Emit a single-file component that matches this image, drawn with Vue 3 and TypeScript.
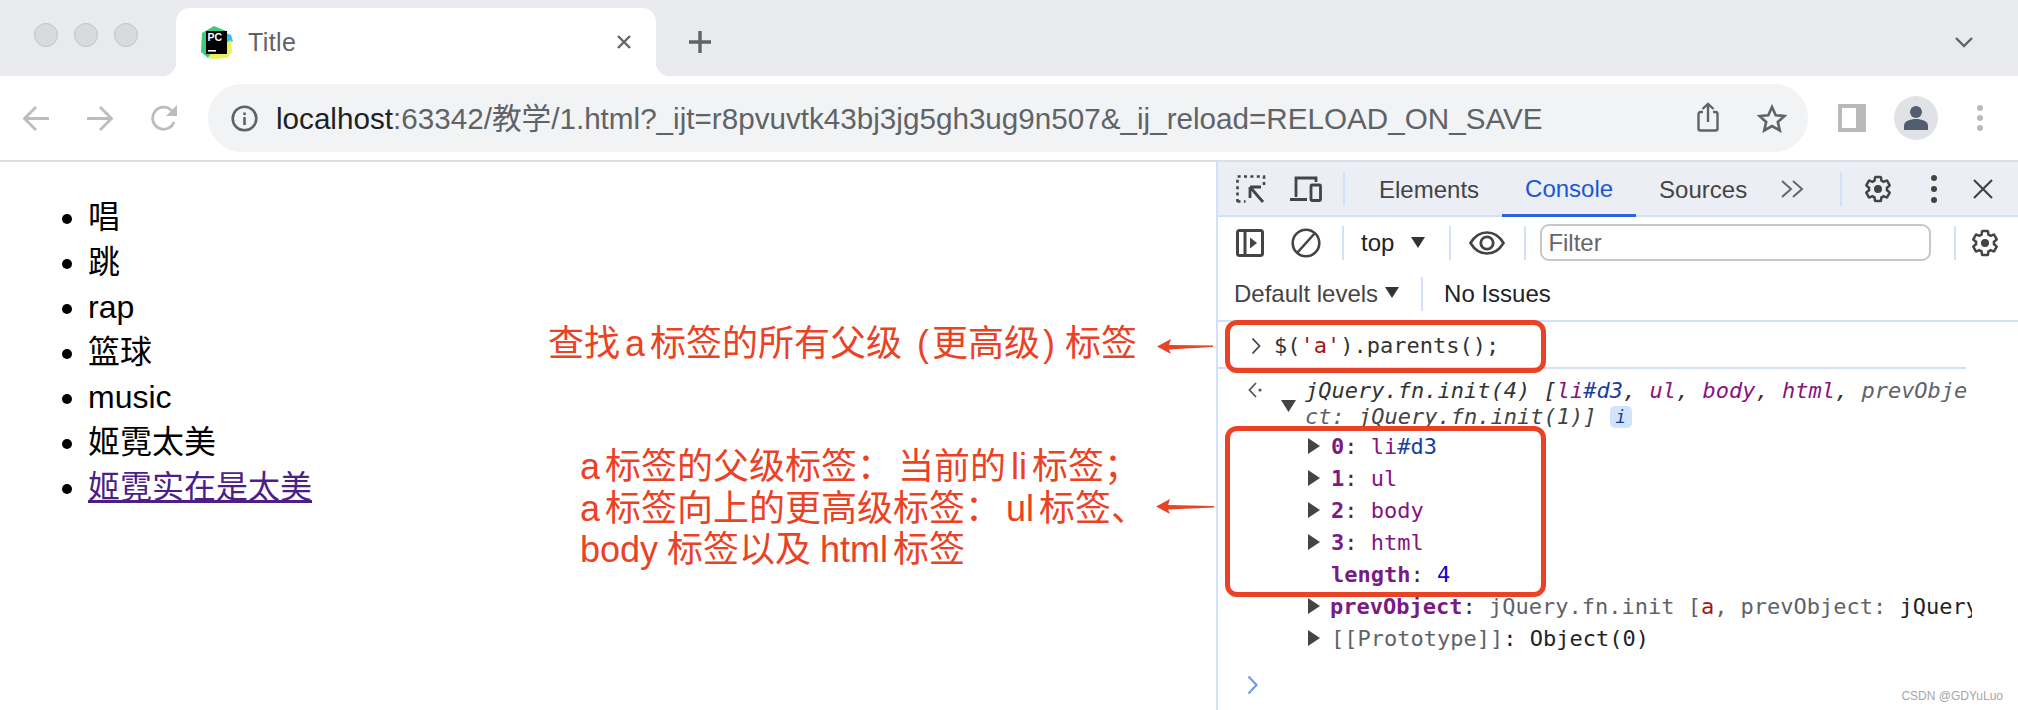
<script setup lang="ts">
const gear =
  'M19.14 12.94c.04-.3.06-.61.06-.94 0-.32-.02-.64-.07-.94l2.03-1.58a.49.49 0 0 0 .12-.61l-1.92-3.32a.488.488 0 0 0-.59-.22l-2.39.96c-.5-.38-1.03-.7-1.62-.94l-.36-2.54a.484.484 0 0 0-.48-.41h-3.84c-.24 0-.43.17-.47.41l-.36 2.54c-.59.24-1.13.57-1.62.94l-2.39-.96c-.22-.08-.47 0-.59.22L2.74 8.87c-.12.21-.08.47.12.61l2.03 1.58c-.05.3-.09.63-.09.94s.02.64.07.94l-2.03 1.58a.49.49 0 0 0-.12.61l1.92 3.32c.12.22.37.29.59.22l2.39-.96c.5.38 1.03.7 1.62.94l.36 2.54c.05.24.24.41.48.41h3.84c.24 0 .44-.17.47-.41l.36-2.54c.59-.24 1.13-.56 1.62-.94l2.39.96c.22.08.47 0 .59-.22l1.92-3.32c.12-.22.07-.47-.12-.61l-2.01-1.58z'
const items: { text: string; link?: boolean }[] = [
  { text: '唱' },
  { text: '跳' },
  { text: 'rap' },
  { text: '篮球' },
  { text: 'music' },
  { text: '姬霓太美' },
  { text: '姬霓实在是太美', link: true },
]
const nodes = [
  { key: '0', tag: 'li', id: '#d3' },
  { key: '1', tag: 'ul', id: '' },
  { key: '2', tag: 'body', id: '' },
  { key: '3', tag: 'html', id: '' },
]
</script>

<template>
  <div class="root">
    <header class="strip">
      <div class="lights"><i></i><i></i><i></i></div>
      <div class="tab">
        <svg class="fav" width="33" height="33" viewBox="0 0 33 33">
          <polygon points="2,7 14,0 26,5 21,20 8,32 1,26" fill="#3fc97f" />
          <polygon points="18,4 31,9 33,15 25,20" fill="#27c4ee" />
          <polygon points="8,32 12,25 31,14 32,26 27,32 14,33" fill="#e8f25c" />
          <rect x="6" y="5" width="21" height="23" fill="#000" />
          <text x="7.5" y="15" class="pc">PC</text>
          <rect x="8" y="24" width="8" height="1.6" fill="#fff" />
        </svg>
        <span class="title">Title</span>
        <svg class="close" width="16" height="16" viewBox="0 0 16 16"><path d="M2 2l12 12M14 2L2 14" stroke="#606367" stroke-width="2.4" /></svg>
      </div>
      <svg class="plus" width="24" height="24" viewBox="0 0 24 24"><path d="M12 1v22M1 12h22" stroke="#606367" stroke-width="3.4" /></svg>
      <svg class="chev" width="18" height="12" viewBox="0 0 18 12"><path d="M1 2l8 8 8-8" fill="none" stroke="#606367" stroke-width="2.4" /></svg>
    </header>

    <nav class="bar">
      <svg class="back" width="26" height="25" viewBox="0 0 26 25"><path d="M26 12.5H2M13 1L1.5 12.5 13 24" fill="none" stroke="#bcbcbc" stroke-width="2.8" /></svg>
      <svg class="fwd" width="26" height="25" viewBox="0 0 26 25"><path d="M0 12.5h24M13 1l11.5 11.5L13 24" fill="none" stroke="#bcbcbc" stroke-width="2.8" /></svg>
      <svg class="rel" width="27" height="26" viewBox="0 0 27 26"><path d="M23 17a11 11 0 1 1-2-11" fill="none" stroke="#bcbcbc" stroke-width="2.8" /><polygon points="26,0 26,11 15,11" fill="#bcbcbc" /></svg>
      <div class="omni">
        <svg class="info" width="27" height="27" viewBox="0 0 27 27"><circle cx="13.5" cy="13.5" r="11.8" fill="none" stroke="#5f6368" stroke-width="2.6" /><rect x="12.2" y="12" width="2.6" height="8" fill="#5f6368" /><rect x="12.2" y="7.5" width="2.6" height="2.6" fill="#5f6368" /></svg>
        <span class="url"><b>localhost</b>:63342/教学/1.html?_ijt=r8pvuvtk43bj3jg5gh3ug9n507&amp;_ij_reload=RELOAD_ON_SAVE</span>
        <svg class="share" width="22" height="30" viewBox="0 0 22 30"><path d="M6 10H3.5A2 2 0 0 0 1.5 12v14.5a2 2 0 0 0 2 2h15a2 2 0 0 0 2-2V12a2 2 0 0 0-2-2H16M11 20V2M5.5 7L11 1.8 16.5 7" fill="none" stroke="#5f6368" stroke-width="2.4" /></svg>
        <svg class="star" width="30" height="29" viewBox="0 0 30 29"><polygon points="15,3 18.7,11.2 27.5,12 20.8,17.9 22.8,26.5 15,22 7.2,26.5 9.2,17.9 2.5,12 11.3,11.2" fill="none" stroke="#5f6368" stroke-width="2.6" /></svg>
      </div>
      <svg class="side" width="28" height="28" viewBox="0 0 28 28"><rect width="28" height="28" fill="#b9b9b9" /><rect x="4" y="4" width="14" height="20" fill="#fff" /></svg>
      <svg class="avatar" width="44" height="44" viewBox="0 0 44 44"><circle cx="22" cy="22" r="22" fill="#e0e2e6" /><circle cx="22" cy="16" r="6" fill="#545c70" /><path d="M10 34v-4c0-5 6-7 12-7s12 2 12 7v4z" fill="#545c70" /></svg>
      <div class="menu"><i></i><i></i><i></i></div>
    </nav>

    <main class="content">
      <section class="page">
        <ul class="list">
          <li v-for="it in items" :key="it.text">
            <a v-if="it.link" class="visited" href="#">{{ it.text }}</a>
            <template v-else>{{ it.text }}</template>
          </li>
        </ul>
      </section>

      <section class="dev">
        <div class="dtabs">
          <svg class="d-inspect" width="30" height="28" viewBox="0 0 30 28">
            <path d="M1.5 27V1.5H28V13" fill="none" stroke="#444" stroke-width="2.6" stroke-dasharray="3 3.4" />
            <path d="M1.5 26.5h8" fill="none" stroke="#444" stroke-width="2.6" stroke-dasharray="3 3.4" />
            <path d="M14 12h11M14 12v11M14 12l13 15" fill="none" stroke="#444" stroke-width="2.8" />
          </svg>
          <svg class="d-device" width="32" height="26" viewBox="0 0 32 26">
            <path d="M6 21V2h20v4M0 23.5h17" fill="none" stroke="#444" stroke-width="2.8" />
            <rect x="21" y="9" width="9.5" height="15.5" rx="1" fill="none" stroke="#444" stroke-width="2.8" />
          </svg>
          <i class="sep s1"></i>
          <span class="dtab">Elements</span>
          <span class="dtab on">Console</span>
          <span class="dtab">Sources</span>
          <svg class="more" width="24" height="18" viewBox="0 0 24 18"><path d="M2 1l9 8-9 8M13 1l9 8-9 8" fill="none" stroke="#666" stroke-width="2" /></svg>
          <i class="sep s2"></i>
          <svg class="g1" width="30" height="30" viewBox="0 0 24 24"><path :d="gear" fill="none" stroke="#444" stroke-width="2" /><circle cx="12" cy="12" r="3.2" fill="#444" /></svg>
          <div class="kebab"><i></i><i></i><i></i></div>
          <svg class="x" width="20" height="20" viewBox="0 0 20 20"><path d="M1 1l18 18M19 1L1 19" stroke="#444" stroke-width="2.2" /></svg>
        </div>

        <div class="dtools">
          <svg class="t-side" width="28" height="28" viewBox="0 0 28 28"><rect x="1.5" y="1.5" width="25" height="25" rx="2" fill="none" stroke="#444" stroke-width="3" /><path d="M9 2v24" stroke="#444" stroke-width="3" /><polygon points="14,8.5 21,14 14,19.5" fill="#444" /></svg>
          <svg class="t-block" width="30" height="30" viewBox="0 0 30 30"><circle cx="15" cy="15" r="13.3" fill="none" stroke="#444" stroke-width="2.6" /><path d="M24 5L6 25" stroke="#444" stroke-width="2.6" /></svg>
          <i class="sep s3"></i>
          <span class="top">top</span>
          <svg class="caret c1" width="14" height="11" viewBox="0 0 14 11"><polygon points="0,0 14,0 7,11" fill="#333" /></svg>
          <i class="sep s4"></i>
          <svg class="eye" width="36" height="24" viewBox="0 0 36 24"><path d="M1.5 12C6 4.5 12 1.5 18 1.5S30 4.5 34.5 12C30 19.5 24 22.5 18 22.5S6 19.5 1.5 12z" fill="none" stroke="#444" stroke-width="2.6" /><circle cx="18" cy="12" r="6.2" fill="none" stroke="#444" stroke-width="2.8" /></svg>
          <i class="sep s5"></i>
          <div class="filter">Filter</div>
          <i class="sep s6"></i>
          <svg class="g2" width="30" height="30" viewBox="0 0 24 24"><path :d="gear" fill="none" stroke="#444" stroke-width="2" /><circle cx="12" cy="12" r="3.2" fill="#444" /></svg>
        </div>

        <div class="dlevels">
          <span class="levels">Default levels</span>
          <svg class="caret c2" width="14" height="11" viewBox="0 0 14 11"><polygon points="0,0 14,0 7,11" fill="#333" /></svg>
          <i class="sep s7"></i>
          <span class="issues">No Issues</span>
        </div>

        <div class="console">
          <div class="input">
            <svg class="prompt" width="10" height="18" viewBox="0 0 10 18"><path d="M1.5 1.5L8.5 9l-7 7.5" fill="none" stroke="#444" stroke-width="1.8" /></svg>
            <span class="code">$(<span class="str">'a'</span>).parents();</span>
          </div>

          <div class="result">
            <svg class="ret" width="14" height="16" viewBox="0 0 14 16"><path d="M8 1L1.5 8 8 15" fill="none" stroke="#555" stroke-width="1.8" /><circle cx="12" cy="8" r="1.6" fill="#555" /></svg>
            <svg class="tri-open" width="15" height="12" viewBox="0 0 15 12"><polygon points="0,0 15,0 7.5,12" fill="#444" /></svg>
            <div class="summary">jQuery.fn.init(4) [<span class="tag">li</span><span class="idn">#d3</span>, <span class="tag">ul</span>, <span class="tag">body</span>, <span class="tag">html</span>, <span class="gray">prevObject: </span><span class="gray2">jQuery.fn.init(1)]</span> <span class="badge">i</span></div>
          </div>

          <div v-for="n in nodes" :key="n.key" class="row">
            <svg class="tri" width="12" height="20" viewBox="0 0 12 20"><polygon points="0,2 12,10 0,18" fill="#444" /></svg>
            <b class="key">{{ n.key }}</b><span class="colon">: </span><span class="tag">{{ n.tag }}</span><span class="idn">{{ n.id }}</span>
          </div>
          <div class="row">
            <span class="tri-gap"></span>
            <b class="key">length</b><span class="colon">: </span><span class="num">4</span>
          </div>
          <div class="row">
            <svg class="tri tight" width="12" height="20" viewBox="0 0 12 20"><polygon points="0,2 12,10 0,18" fill="#444" /></svg>
            <b class="key">prevObject</b><span class="colon">: </span><span class="gray">jQuery.fn.init [<span class="str">a</span>, prevObject: </span><span class="dark">jQuery.fn.init(1)]</span>
          </div>
          <div class="row">
            <svg class="tri" width="12" height="20" viewBox="0 0 12 20"><polygon points="0,2 12,10 0,18" fill="#444" /></svg>
            <span class="gray">[[Prototype]]</span><span class="dark">: Object(0)</span>
          </div>
          <svg class="next" width="11" height="20" viewBox="0 0 11 20"><path d="M1.5 1.5L9.5 10l-8 8.5" fill="none" stroke="#6d9cf3" stroke-width="2.2" /></svg>
        </div>
      </section>
    </main>

    <!-- annotations drawn over the screenshot -->
    <div class="note n1">查找<span class="w">a</span>标签的所有父级<span class="po">(</span>更高级<span class="pc2">)</span>标签</div>
    <div class="note n2"><span class="w w0">a</span>标签的父级标签：<span class="cgap">当前的</span><span class="w">li</span>标签；<br /><span class="w w0">a</span>标签向上的更高级标签：<span class="w">ul</span>标签、<br /><span class="w w0 wb">body</span>标签以及<span class="w wh">html</span>标签</div>
    <svg class="arrow a1" width="56" height="16" viewBox="0 0 56 16"><polygon points="0,7.5 14,0 12,6 56,6.5 56,8 12,10.5 14,15" fill="#ea4225" /></svg>
    <svg class="arrow a2" width="58" height="16" viewBox="0 0 58 16"><polygon points="0,7.5 14,0 12,6 58,7 58,8.5 12,10.5 14,15" fill="#ea4225" /></svg>
    <div class="redbox b1"></div>
    <div class="redbox b2"></div>
    <div class="mark">CSDN @GDYuLuo</div>
  </div>
</template>

<style scoped>
.root {
  position: relative;
  width: 2018px;
  height: 710px;
  overflow: hidden;
  background: #fff;
  display: flex;
  flex-direction: column;
  font-family: "Liberation Sans", "Noto Sans CJK SC", sans-serif;
}
i { display: block; }

/* tab strip */
.strip {
  height: 76px;
  background: #e8eaed;
  display: flex;
  align-items: center;
  flex: none;
}
.lights { display: flex; gap: 16px; margin-left: 34px; margin-top: -6px; }
.lights i {
  width: 24px; height: 24px; border-radius: 50%;
  background: #d9dadc; border: 1px solid #c3c4c6; box-sizing: border-box;
}
.tab {
  position: relative;
  align-self: flex-end;
  width: 480px;
  height: 68px;
  margin-left: 38px;
  box-sizing: border-box;
  padding: 0 24px;
  background: #fff;
  border-radius: 14px 14px 0 0;
  display: flex;
  align-items: center;
}
.tab::before, .tab::after {
  content: "";
  position: absolute;
  bottom: 0;
  width: 14px;
  height: 14px;
}
.tab::before { left: -14px; background: radial-gradient(circle at 0 0, transparent 14px, #fff 14.5px); }
.tab::after { right: -14px; background: radial-gradient(circle at 100% 0, transparent 14px, #fff 14.5px); }
.fav { flex: none; margin-top: 1px; }
.pc { font: 700 10.5px "Liberation Sans", sans-serif; fill: #fff; }
.title { margin-left: 15px; font-size: 25px; letter-spacing: .4px; color: #5f6368; }
.close { margin-left: auto; }
.plus { margin-left: 32px; margin-top: 8px; }
.chev { margin-left: auto; margin-right: 45px; margin-top: 8px; }

/* address bar */
.bar {
  height: 84px;
  flex: none;
  display: flex;
  align-items: center;
  box-sizing: border-box;
  padding-left: 23px;
  background: #fff;
}
.fwd { margin-left: 38px; }
.rel { margin-left: 38px; }
.omni {
  margin-left: 30px;
  width: 1600px;
  height: 68px;
  border-radius: 34px;
  background: #f1f3f5;
  box-sizing: border-box;
  padding: 0 21px 0 23px;
  display: flex;
  align-items: center;
  flex: none;
}
.url { margin-left: 18px; font-size: 29.65px; color: #5f6368; white-space: nowrap; margin-top: -4px; }
.url b { font-weight: 400; color: #202124; }
.share { margin-left: auto; margin-bottom: 2px; }
.star { margin-left: 38px; }
.side { margin-left: 30px; }
.avatar { margin-left: 28px; }
.menu { margin-left: 39px; display: flex; flex-direction: column; gap: 4px; }
.menu i { width: 6px; height: 6px; border-radius: 50%; background: #bababa; }

/* page + devtools */
.content {
  flex: 1;
  min-height: 0;
  display: flex;
  border-top: 2px solid #dcdee1;
}
.page { width: 1216px; flex: none; }
.list {
  margin: 33px 0 0;
  padding: 0 0 0 88px;
  font-size: 32px;
  line-height: 45px;
  color: #000;
}
.visited { color: #4c1f88; }

.dev {
  flex: 1;
  min-width: 0;
  border-left: 2px solid #d3e0f7;
  display: flex;
  flex-direction: column;
  font-size: 24px;
  color: #444;
}
.sep { width: 2px; height: 34px; background: #d3e0f7; flex: none; }

.dtabs {
  height: 55px;
  box-sizing: border-box;
  flex: none;
  background: #eceef5;
  border-bottom: 2px solid #d3e0f7;
  display: flex;
  align-items: center;
  padding-left: 18px;
}
.d-device { margin-left: 24px; }
.s1 { margin: 0 11px 0 21px; }
.dtab { padding: 2px 23px 0; height: 100%; display: flex; align-items: center; box-sizing: border-box; }
.dtab.on { color: #1a56d6; border-bottom: 3px solid #2a63dd; margin-bottom: -2px; height: 55px; }
.more { margin-left: 10px; }
.s2 { margin-left: 36px; }
.g1 { margin-left: 21px; }
.kebab { margin-left: 38px; display: flex; flex-direction: column; gap: 5px; }
.kebab i { width: 6px; height: 6px; border-radius: 50%; background: #444; }
.x { margin-left: 36px; }

.dtools {
  height: 51px;
  flex: none;
  display: flex;
  align-items: center;
  padding-left: 18px;
}
.t-block { margin-left: 27px; }
.s3 { margin-left: 21px; }
.top { margin-left: 17px; color: #222; }
.c1 { margin-left: 17px; }
.s4 { margin-left: 24px; }
.eye { margin-left: 18px; }
.s5 { margin-left: 19px; }
.filter {
  margin-left: 14px;
  width: 391px;
  height: 37px;
  box-sizing: border-box;
  border: 2px solid #c8c8c8;
  border-radius: 9px;
  padding-left: 6px;
  display: flex;
  align-items: center;
  color: #666;
}
.s6 { margin-left: 23px; }
.g2 { margin-left: 14px; }

.dlevels {
  height: 54px;
  flex: none;
  box-sizing: border-box;
  border-bottom: 2px solid #d3e0f7;
  display: flex;
  align-items: center;
  padding-left: 16px;
}
.c2 { margin-left: 7px; margin-top: -4px; }
.s7 { margin-left: 22px; }
.issues { margin-left: 21px; color: #222; }

.console {
  flex: 1;
  min-height: 0;
  font-family: "DejaVu Sans Mono", monospace;
  font-size: 22px;
  color: #333;
}
.input {
  height: 47px;
  width: 748px;
  box-sizing: border-box;
  border-bottom: 2px solid #d3e0f7;
  display: flex;
  align-items: center;
  padding-left: 33px;
  padding-top: 2px;
}
.code { margin-left: 13px; white-space: pre; }
.str { color: #a31515; }
.result { display: flex; padding: 9px 0 0 30px; align-items: flex-start; }
.ret { flex: none; margin-top: 4px; }
.tri-open { flex: none; margin: 22px 0 0 19px; }
.summary {
  width: 663px;
  margin-left: 9px;
  line-height: 26px;
  font-style: italic;
  word-break: break-all;
  flex: none;
  color: #333;
}
.tag { color: #881280; }
.idn { color: #1a3e9c; }
.gray { color: #5f6368; }
.gray2 { color: #444; }
.dark { color: #222; }
.num { color: #1c00cf; }
.badge {
  display: inline-block;
  width: 22px;
  height: 22px;
  line-height: 22px;
  text-align: center;
  border-radius: 5px;
  background: #d2e3fc;
  color: #1a3e9c;
  font-size: 18px;
  vertical-align: 1px;
}
.row {
  height: 32px;
  width: 754px;
  box-sizing: border-box;
  padding-left: 90px;
  display: flex;
  align-items: center;
  white-space: pre;
  overflow: hidden;
  flex: none;
}
.tri { flex: none; margin-right: 11px; }
.tri.tight { margin-right: 10px; }
.tri-gap { width: 23px; flex: none; }
.key { color: #7a1a82; font-weight: 700; }
.colon { color: #333; }
.next { display: block; margin: 21px 0 0 29px; }

/* overlays */
.note {
  position: absolute;
  color: #ea4225;
  font-size: 36px;
  white-space: nowrap;
  font-family: "Liberation Sans", "Noto Sans CJK SC", sans-serif;
}
.w { margin: 0 5px; }
.w0 { margin-left: 0; }
.wb { margin-right: 9px; }
.wh { margin-left: 9px; }
.cgap { margin-left: 5px; }
.po { margin: 0 3px 0 15px; }
.pc2 { margin: 0 10px 0 3px; }
.n1 { left: 548px; top: 323px; line-height: 42px; }
.n2 { left: 580px; top: 446px; line-height: 41.5px; }
.arrow { position: absolute; }
.a1 { left: 1157px; top: 339px; }
.a2 { left: 1156px; top: 499px; }
.redbox {
  position: absolute;
  left: 1225px;
  width: 321px;
  box-sizing: border-box;
  border: 5px solid #ea4225;
  border-radius: 12px;
}
.b1 { top: 320px; height: 53px; }
.b2 { top: 426px; height: 171px; }
.mark {
  position: absolute;
  right: 15px;
  top: 689px;
  font-size: 12px;
  color: #a5a5a5;
}
</style>
